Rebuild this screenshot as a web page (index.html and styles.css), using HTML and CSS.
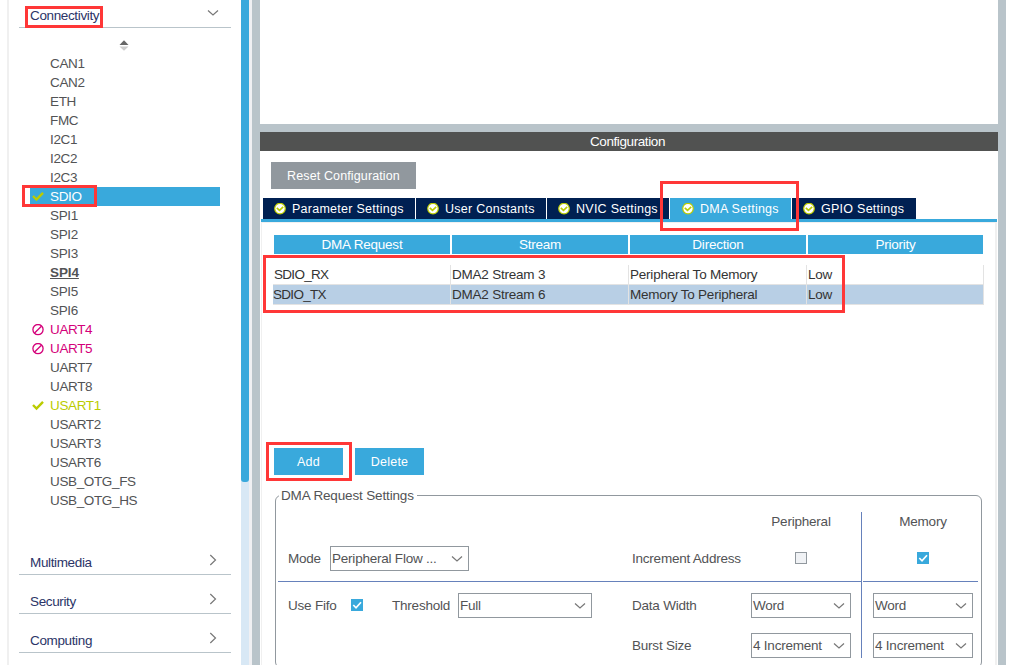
FILE: index.html
```html
<!DOCTYPE html>
<html lang="en">
<head>
  <meta charset="UTF-8">
  <title>Pinout &amp; Configuration</title>
  <link rel="stylesheet" href="styles.css">
</head>
<body>

  <!-- shared icons -->
  <svg class="defs" width="0" height="0">
    <symbol id="check" viewBox="0 0 12 12"><path d="M1 5 L4.5 8.6 L11 1.8" fill="none" stroke="#bbcc00" stroke-width="2.4"/></symbol>
    <symbol id="ban" viewBox="0 0 12 12"><circle cx="6" cy="5.6" r="5.1" fill="none" stroke="#d4007a" stroke-width="1.3"/><path d="M2.6 9 L9.4 2.2" stroke="#d4007a" stroke-width="1.3"/></symbol>
    <symbol id="ok" viewBox="0 0 12 12"><circle cx="6" cy="5.6" r="5.3" fill="#fff" stroke="#bbcc00" stroke-width="1.2"/><path d="M2.8 4.8 L5.5 7.4 L9.2 3.9" fill="none" stroke="#bbcc00" stroke-width="1.6"/></symbol>
    <symbol id="down" viewBox="0 0 12 8"><path d="M1 1.5 L6 6 L11 1.5" fill="none" stroke="#777" stroke-width="1.2"/></symbol>
    <symbol id="right" viewBox="0 0 8 12"><path d="M1.3 1 L6.5 6 L1.3 11" fill="none" stroke="#777" stroke-width="1.2"/></symbol>
    <symbol id="tick" viewBox="0 0 12 12"><path d="M2.3 6 L5 8.8 L10 3.2" fill="none" stroke="#fff" stroke-width="1.7"/></symbol>
  </svg>

  <div class="app">
    <div class="sidebar">
      <div class="group open"><span>Connectivity</span><svg class="down"><use href="#down"/></svg></div>
      <div class="sorter">
        <svg width="10" height="11" viewBox="0 0 10 11"><path d="M0.5 5 L5 0.2 L9.5 5 Z" fill="#666"/><path d="M0.5 6.5 L5 10.8 L9.5 6.5 Z" fill="#ccc"/></svg>
      </div>
      <ul class="list">
        <li>CAN1</li>
        <li>CAN2</li>
        <li>ETH</li>
        <li>FMC</li>
        <li>I2C1</li>
        <li>I2C2</li>
        <li>I2C3</li>
        <li class="selected"><svg><use href="#check"/></svg>SDIO</li>
        <li>SPI1</li>
        <li>SPI2</li>
        <li>SPI3</li>
        <li class="partial">SPI4</li>
        <li>SPI5</li>
        <li>SPI6</li>
        <li class="conflict"><svg><use href="#ban"/></svg>UART4</li>
        <li class="conflict"><svg><use href="#ban"/></svg>UART5</li>
        <li>UART7</li>
        <li>UART8</li>
        <li class="enabled"><svg><use href="#check"/></svg>USART1</li>
        <li>USART2</li>
        <li>USART3</li>
        <li>USART6</li>
        <li>USB_OTG_FS</li>
        <li>USB_OTG_HS</li>
      </ul>
      <div class="group"><span>Multimedia</span><svg class="right"><use href="#right"/></svg></div>
      <div class="group"><span>Security</span><svg class="right"><use href="#right"/></svg></div>
      <div class="group"><span>Computing</span><svg class="right"><use href="#right"/></svg></div>
    </div>

    <div class="scrollbar"><div class="thumb"></div></div>

    <div class="main">
      <div class="mode-panel"></div>
      <div class="config">
        <div class="title">Configuration</div>
        <button class="btn reset">Reset Configuration</button>
        <div class="tabs">
          <div class="tab t1"><svg><use href="#ok"/></svg>Parameter Settings</div>
          <div class="tab t2"><svg><use href="#ok"/></svg>User Constants</div>
          <div class="tab t3"><svg><use href="#ok"/></svg>NVIC Settings</div>
          <div class="tab t4 active"><svg><use href="#ok"/></svg>DMA Settings</div>
          <div class="tab t5"><svg><use href="#ok"/></svg>GPIO Settings</div>
        </div>

        <div class="panel">
          <div class="thead">
            <div>DMA Request</div><div>Stream</div><div>Direction</div><div>Priority</div>
          </div>
          <div class="rows">
            <div class="row"><div class="req">SDIO_RX</div><div>DMA2 Stream 3</div><div>Peripheral To Memory</div><div>Low</div></div>
            <div class="row current"><div class="req">SDIO_TX</div><div>DMA2 Stream 6</div><div>Memory To Peripheral</div><div>Low</div></div>
          </div>

          <div class="actions">
            <button class="btn">Add</button>
            <button class="btn">Delete</button>
          </div>

          <fieldset class="settings">
            <legend>DMA Request Settings</legend>
            <div class="cols">
              <div class="col peripheral">
                <div class="line head"><span class="centered">Peripheral</span></div>
                <div class="line">
                  <div class="left"><label class="mode">Mode</label><div class="select flow">Peripheral Flow ...<svg class="down"><use href="#down"/></svg></div></div>
                  <label class="name">Increment Address</label>
                  <span class="centered"><i class="box"></i></span>
                </div>
                <div class="rule"></div>
                <div class="line">
                  <div class="left"><label class="fifo">Use Fifo</label><i class="box on"><svg><use href="#tick"/></svg></i><label class="threshold">Threshold</label><div class="select full">Full<svg class="down"><use href="#down"/></svg></div></div>
                  <label class="name">Data Width</label>
                  <div class="select">Word<svg class="down"><use href="#down"/></svg></div>
                </div>
                <div class="line last">
                  <div class="left"></div>
                  <label class="name">Burst Size</label>
                  <div class="select">4 Increment<svg class="down"><use href="#down"/></svg></div>
                </div>
              </div>
              <div class="col memory">
                <div class="line head"><span class="centered">Memory</span></div>
                <div class="line"><span class="centered"><i class="box on"><svg><use href="#tick"/></svg></i></span></div>
                <div class="rule"></div>
                <div class="line"><div class="select">Word<svg class="down"><use href="#down"/></svg></div></div>
                <div class="line last"><div class="select">4 Increment<svg class="down"><use href="#down"/></svg></div></div>
              </div>
            </div>
          </fieldset>
        </div>
      </div>
    </div>
  </div>

  <!-- red marks over the steps to follow -->
  <div class="mark mark-group"></div>
  <div class="mark mark-sdio"></div>
  <div class="mark mark-tab"></div>
  <div class="mark mark-rows"></div>
  <div class="mark mark-add"></div>

</body>
</html>
```
FILE: styles.css
```css
* {
  box-sizing: border-box;
}
body {
  margin: 0;
  height: 665px;
  overflow: hidden;
  background: white;
  font-family: "Liberation Sans", Arial, sans-serif;
  font-size: 13.5px;
  letter-spacing: -0.22px;
  color: #525355;
}
.defs {
  position: absolute;
}
svg {
  display: block;
  flex: none;
}
svg.down {
  width: 12px;
  height: 8px;
}
svg.right {
  width: 8px;
  height: 12px;
}
.app {
  display: flex;
  height: 665px;
  overflow: hidden;
}

/* left side */
.sidebar {
  width: 234px;
  margin-left: 7px;
  padding: 0 10px;
  border-left: 2px solid #f0f0f0;
  letter-spacing: -0.36px;
}
.group {
  display: flex;
  align-items: flex-end;
  justify-content: space-between;
  width: 212px;
  height: 39px;
  padding: 0 14px 4px 11px;
  border-bottom: 1px solid #b9c4ca;
  color: #2b3467;
  line-height: 15px;
}
.group.open {
  height: 28px;
  padding-right: 12px;
}
.group svg.right {
  margin-bottom: 4px;
}
.group svg.down {
  margin-bottom: 6px;
}
.sorter {
  height: 26px;
  padding: 12px 0 0 100px;
}
.list {
  list-style: none;
  margin: 0 0 26px 11px;
  padding: 0;
  width: 190px;
}
.list li {
  display: flex;
  align-items: center;
  height: 19px;
  line-height: 19px;
  padding-left: 20px;
}
.list svg {
  width: 12px;
  height: 12px;
  margin: 0 6px 0 -18px;
}
.list .selected {
  background: #39a9dc;
  color: white;
}
.list .partial {
  font-weight: bold;
  text-decoration: underline;
  letter-spacing: -0.1px;
}
.list .conflict {
  color: #d4007a;
}
.list .enabled {
  color: #bbcc00;
}
.scrollbar {
  width: 8px;
  background: #d8e8f5;
}
.thumb {
  height: 482px;
  background: #39a9dc;
  border-radius: 0 0 3px 3px;
}

/* right side */
.main {
  width: 754px;
  margin-left: 3px;
  border: solid #b9c4ca;
  border-width: 0 8px;
  box-shadow: -3px 0 0 #f0f0f3;
}
.mode-panel {
  height: 132px;
  border-bottom: 8px solid #b9c4ca;
}
.title {
  height: 19px;
  line-height: 19px;
  background: #515251;
  color: white;
  text-align: center;
  padding-right: 3px;
  letter-spacing: -0.4px;
}
.btn {
  width: 69px;
  height: 27px;
  padding: 0;
  border: none;
  background: #39a9dc;
  color: white;
  font-family: inherit;
  font-size: 12.5px;
  letter-spacing: 0.25px;
}
.btn.reset {
  display: block;
  width: 145px;
  margin: 11px 0 9px 11px;
  background: #91989e;
  letter-spacing: 0.12px;
}
.tabs {
  display: flex;
  gap: 1px;
  height: 24px;
  margin: 0 1px;
  padding-left: 2px;
  border-bottom: 3px solid #39a9dc;
}
.tab {
  display: flex;
  align-items: center;
  height: 21px;
  padding-left: 11px;
  background: #002052;
  color: white;
  font-size: 12.5px;
  letter-spacing: 0.26px;
  white-space: nowrap;
}
.tab svg {
  width: 12px;
  height: 12px;
  margin-right: 6px;
}
.t1 { width: 152px; }
.t2 { width: 130px; }
.t3 { width: 122px; }
.t4 { width: 121px; padding-left: 12px; }
.t5 { width: 124px; }
.tab.active {
  background: #39a9dc;
}
.panel {
  height: 460px;
  margin: 0 1px;
  padding: 12px 12px 0 10px;
  border: solid #f0f0f0;
  border-width: 1px 2px 0 1px;
}
.thead {
  display: grid;
  grid-template-columns: 176px 176px 176px 175px;
  gap: 2px;
  margin-left: 2px;
  line-height: 19px;
  color: white;
  text-align: center;
}
.thead div {
  background: #39a9dc;
}
.rows {
  margin: 11px 0 0 1px;
  width: 711px;
  color: #333;
}
.row {
  display: grid;
  grid-template-columns: 178px 178px 178px 177px;
  height: 20px;
  line-height: 19px;
}
.row div {
  height: 20px;
  padding-left: 1px;
  border-right: 1px solid #e3e3e3;
  border-bottom: 1px solid #e3e3e3;
}
.row .req {
  letter-spacing: -0.7px;
}
.row.current {
  background: #b8cfe5;
}
.row.current .req {
  padding-left: 0;
}
.actions {
  display: flex;
  gap: 12px;
  margin: 143px 0 0 2px;
}
.settings {
  height: 180px;
  margin: 13px 0 0 3px;
  width: 707px;
  padding: 0;
  border: 1px solid #91989e;
  border-radius: 6px;
}
.settings legend {
  margin-left: 3px;
  padding: 0 3px 0 2px;
  height: 15px;
  line-height: 15px;
  letter-spacing: -0.15px;
}
.cols {
  display: flex;
  gap: 1px;
  margin-top: 9px;
}
.col {
  height: 146px;
}
.col.peripheral {
  width: 586px;
  border-right: 1px solid #6681bb;
}
.line {
  display: flex;
  align-items: center;
  height: 25px;
}
.line.head {
  height: 18px;
  margin-bottom: 16px;
  justify-content: flex-end;
}
.peripheral .head {
  padding-right: 10px;
}
.line.last {
  margin-top: 15px;
}
.rule {
  height: 1px;
  margin: 10px 0 11px;
  background: #6681bb;
}
.peripheral .rule {
  margin-left: 2px;
}
.memory {
  width: 115px;
}
.memory .line {
  padding-left: 10px;
  justify-content: flex-start;
}
.left {
  display: flex;
  align-items: center;
  width: 356px;
  padding-left: 12px;
}
.mode {
  width: 42px;
}
.fifo {
  width: 63px;
}
.threshold {
  width: 66px;
  margin-left: 29px;
}
.name {
  width: 119px;
}
.centered {
  display: flex;
  justify-content: center;
  width: 100px;
}
.box {
  display: block;
  flex: none;
  width: 12px;
  height: 12px;
  margin-bottom: 1px;
  border: 1px solid #91989e;
  background: #f0f2f5;
}
.box.on {
  border: none;
  background: #39a9dc;
}
.box svg {
  width: 12px;
  height: 12px;
}
.select {
  display: flex;
  align-items: center;
  justify-content: space-between;
  width: 100px;
  height: 25px;
  padding: 0 5px 0 1px;
  border: 1px solid #91989e;
  background: white;
  white-space: nowrap;
}
.select.flow {
  width: 139px;
}
.select.full {
  width: 134px;
}

/* marks */
.mark {
  position: absolute;
  border: 3px solid #ff3737;
}
.mark-group { left: 25px; top: 6px; width: 78px; height: 22px; }
.mark-sdio { left: 22px; top: 185px; width: 75px; height: 22px; }
.mark-tab { left: 660px; top: 181px; width: 139px; height: 50px; }
.mark-rows { left: 263px; top: 255px; width: 582px; height: 58px; }
.mark-add { left: 266px; top: 442px; width: 86px; height: 39px; }
```
